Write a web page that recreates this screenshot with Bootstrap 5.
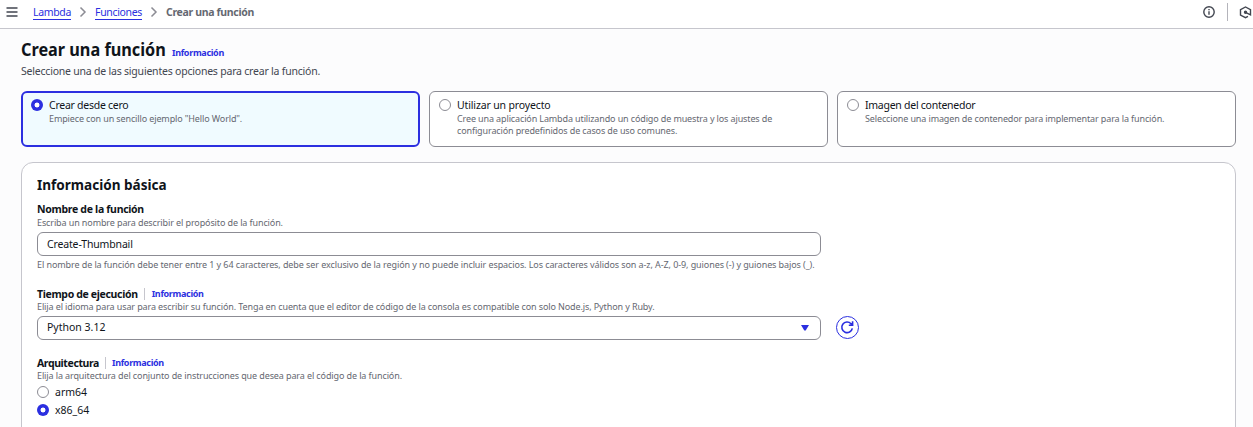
<!DOCTYPE html>
<html lang="es">
<head>
<meta charset="utf-8">
<title>Crear una función - Lambda</title>
<meta name="viewport" content="width=device-width, initial-scale=1">
<link href="https://cdn.jsdelivr.net/npm/bootstrap@5.3.0/dist/css/bootstrap.min.css" rel="stylesheet">
<style>
  :root { --accent: #2b2fe0; --ink: #0f141a; --muted: #656871; --edge: #8c8c94; --soft: #c6c6cd; }
  html, body { height: 100%; overflow: hidden; }
  body { font-family: "Noto Sans", "Open Sans", sans-serif; font-size: 10.5px; line-height: 15px; letter-spacing: -.26px; color: var(--ink); background: #fcfcfd; }
  .topbar { height: 29px; border-bottom: 1px solid var(--soft); padding: 0 1px 4px 6px; }
  .crumbs { margin-left: 15px; }
  .crumb-link { color: var(--accent); border-bottom: 1px solid var(--accent); line-height: 14px; margin-top: 1px; letter-spacing: -.33px; }
  .crumb-now { color: var(--muted); letter-spacing: -.33px; }
  .bar-rule { width: 1px; height: 18px; background: #b4b4bb; margin: 0 11px 0 12px; }
  main { height: calc(100vh - 29px); overflow: hidden; padding: 11px 17px 0 21px; }
  .title-row { height: 19px; }
  h1, h2 { letter-spacing: 0; white-space: nowrap; transform: scaleX(.903); transform-origin: left; }
  h1 { width: 144px; font-size: 18px; line-height: 18px; }
  h2 { width: 130px; font-size: 15px; line-height: 18px; }
  .label-bold { font-weight: 700; letter-spacing: -.3px; }
  .info { color: var(--accent); font-size: 9px; line-height: 12px; font-weight: 700; text-decoration: none; letter-spacing: -.32px; }
  .info-title { margin: 7px 0 0 7px; }
  .hint { color: var(--muted); font-size: 9px; line-height: 12px; letter-spacing: -.11px; }
  .tile .hint { letter-spacing: -.125px; }
  .hint-long { letter-spacing: -.088px; margin-top: 3px; }
  .lede { color: #424650; margin-top: 5px; letter-spacing: -.21px; }
  .tiles { margin-top: 12px; gap: 9px; }
  .tile { flex: 1 1 0; height: 56px; border: 1px solid var(--edge); border-radius: 6px; background: #fff; padding: 6px 9px; gap: 6px; }
  .tile-on { border: 2px solid var(--accent); background: #f0fbff; padding: 5px 8px; }
  .tile .dot { margin-top: 1px; }
  .dot { width: 12px; height: 12px; border: 1px solid var(--edge); border-radius: 50%; background: #fff; flex: none; }
  .dot-on { border: 0; background: radial-gradient(circle, #fff 2.1px, var(--accent) 2.8px); }
  .panel { margin-top: 15px; height: 300px; border: 1px solid var(--soft); border-radius: 12px; background: #fff; padding: 12px 15px; }
  .field { width: 784px; height: 24px; border: 1px solid var(--edge); border-radius: 6px; padding: 0 10px 0 9px; background: #fff; color: var(--ink); font-size: 10.5px; line-height: 15px; letter-spacing: -.15px; }
  .choice { padding-bottom: 2px; letter-spacing: 0; }
  .with-info { padding-right: 6px; margin-right: 7px; border-right: 1px solid var(--soft); line-height: 12px; }
  .option { height: 15px; margin-top: 3px; gap: 6px; letter-spacing: 0; }
  .option .dot { margin-bottom: 1px; }
  .label-row { height: 15px; margin-top: 15px; }
  .label-row .label-bold { letter-spacing: -.34px; }
  .label-row .label-tight { letter-spacing: -.4px; margin-right: 6px; }
  .round-btn { width: 23px; height: 23px; border: 1px solid var(--accent); border-radius: 50%; margin-left: 15px; }
</style>
</head>
<body>
<header class="topbar bg-white d-flex align-items-center">
  <svg width="12" height="12" viewBox="0 0 12 12" stroke="#424650" stroke-width="1.500"><path d="M.5 2h11M.5 6h11M.5 10h11"/></svg>
  <nav class="crumbs d-flex align-items-center flex-grow-1">
    <a class="crumb-link text-decoration-none" href="#">Lambda</a>
    <svg class="mx-2" width="8" height="12" viewBox="0 0 8 12" fill="none" stroke="#8c8c94" stroke-width="1.500"><path d="M1.500 1.500 6 6l-4.500 4.500"/></svg>
    <a class="crumb-link text-decoration-none" href="#">Funciones</a>
    <svg class="mx-2" width="8" height="12" viewBox="0 0 8 12" fill="none" stroke="#8c8c94" stroke-width="1.500"><path d="M1.500 1.500 6 6l-4.500 4.500"/></svg>
    <span class="crumb-now fw-bold">Crear una función</span>
  </nav>
  <svg width="12" height="12" viewBox="0 0 12 12" fill="none" stroke="#424650" stroke-width="1.400"><circle cx="6" cy="6" r="5.200"/><path d="M6 5.300v3.500M6 3v1.300"/></svg>
  <span class="bar-rule"></span>
  <svg width="13" height="13" viewBox="0 0 13 13" fill="none" stroke="#424650" stroke-width="1.400"><path d="M9 10.300 6.500 11.700 1.500 9V3.700L6.500 1l5 2.700v5.100L6.500 6.400"/><circle cx="6.500" cy="6.300" r="1" fill="#424650"/></svg>
</header>
<main>
  <div class="title-row d-flex">
    <h1 class="fw-bold m-0">Crear una función</h1>
    <a class="info info-title" href="#">Información</a>
  </div>
  <p class="lede mb-0">Seleccione una de las siguientes opciones para crear la función.</p>
  <div class="tiles d-flex">
    <div class="tile tile-on d-flex"><span class="dot dot-on"></span><div><div>Crear desde cero</div><div class="hint">Empiece con un sencillo ejemplo "Hello World".</div></div></div>
    <div class="tile d-flex"><span class="dot"></span><div><div style="letter-spacing:-.14px">Utilizar un proyecto</div><div class="hint">Cree una aplicación Lambda utilizando un código de muestra y los ajustes de<br>configuración predefinidos de casos de uso comunes.</div></div></div>
    <div class="tile d-flex"><span class="dot"></span><div><div>Imagen del contenedor</div><div class="hint">Seleccione una imagen de contenedor para implementar para la función.</div></div></div>
  </div>
  <section class="panel">
    <h2 class="fw-bold m-0">Información básica</h2>
    <div class="label-bold" style="margin-top:9px">Nombre de la función</div>
    <div class="hint">Escriba un nombre para describir el propósito de la función.</div>
    <input class="field d-block" style="margin-top:3px" value="Create-Thumbnail">
    <div class="hint hint-long">El nombre de la función debe tener entre 1 y 64 caracteres, debe ser exclusivo de la región y no puede incluir espacios. Los caracteres válidos son a-z, A-Z, 0-9, guiones (-) y guiones bajos (_).</div>
    <div class="label-row d-flex align-items-center"><span class="with-info label-bold">Tiempo de ejecución</span><a class="info" href="#">Información</a></div>
    <div class="hint">Elija el idioma para usar para escribir su función. Tenga en cuenta que el editor de código de la consola es compatible con solo Node.js, Python y Ruby.</div>
    <div class="d-flex" style="margin-top:3px">
      <div class="field choice d-flex align-items-center justify-content-between">Python 3.12<svg width="10" height="8" viewBox="0 0 10 8"><path d="M1 2h8L5.700 7.500H4.300z" fill="#2b2fe0"/></svg></div>
      <button class="round-btn bg-white p-0 d-flex align-items-center justify-content-center"><svg width="15" height="15" viewBox="0 0 15 15" fill="none" stroke="#2b2fe0" stroke-width="1.600"><path d="M12.300 8.300a5.300 5.300 0 1 1-1.300-4.600l1.400 1.300M12.600 1.300v4H8.800"/></svg></button>
    </div>
    <div class="label-row d-flex align-items-center"><span class="with-info label-bold label-tight">Arquitectura</span><a class="info" href="#">Información</a></div>
    <div class="hint">Elija la arquitectura del conjunto de instrucciones que desea para el código de la función.</div>
    <div class="option d-flex align-items-center"><span class="dot"></span>arm64</div>
    <div class="option d-flex align-items-center"><span class="dot dot-on"></span>x86_64</div>
  </section>
</main>
<script src="https://cdn.jsdelivr.net/npm/bootstrap@5.3.0/dist/js/bootstrap.bundle.min.js"></script>
</body>
</html>
